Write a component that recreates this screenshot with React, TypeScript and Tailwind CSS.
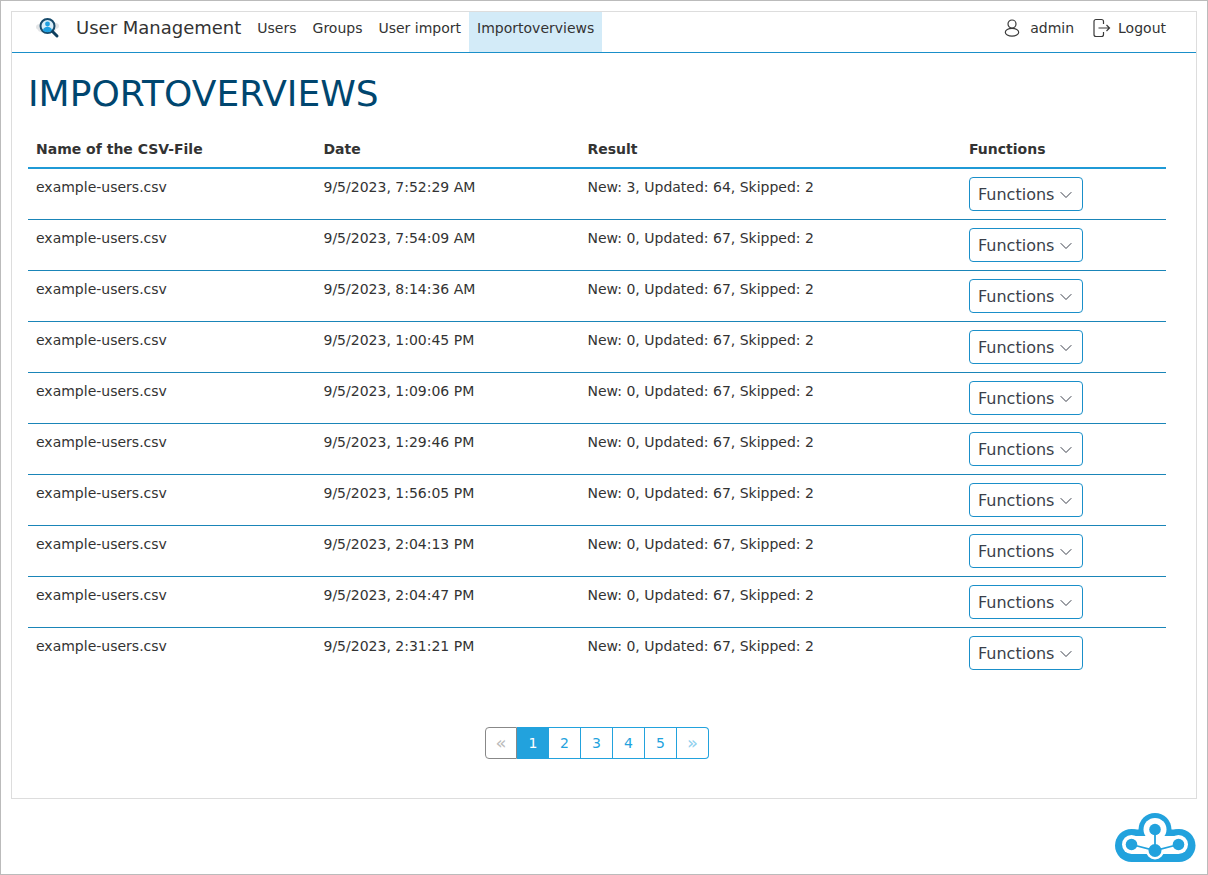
import React from "react";

const rows = [
  ["9/5/2023, 7:52:29 AM", "New: 3, Updated: 64, Skipped: 2"],
  ["9/5/2023, 7:54:09 AM", "New: 0, Updated: 67, Skipped: 2"],
  ["9/5/2023, 8:14:36 AM", "New: 0, Updated: 67, Skipped: 2"],
  ["9/5/2023, 1:00:45 PM", "New: 0, Updated: 67, Skipped: 2"],
  ["9/5/2023, 1:09:06 PM", "New: 0, Updated: 67, Skipped: 2"],
  ["9/5/2023, 1:29:46 PM", "New: 0, Updated: 67, Skipped: 2"],
  ["9/5/2023, 1:56:05 PM", "New: 0, Updated: 67, Skipped: 2"],
  ["9/5/2023, 2:04:13 PM", "New: 0, Updated: 67, Skipped: 2"],
  ["9/5/2023, 2:04:47 PM", "New: 0, Updated: 67, Skipped: 2"],
  ["9/5/2023, 2:31:21 PM", "New: 0, Updated: 67, Skipped: 2"],
];

const AppIcon = () => (
  <svg width="28" height="24" viewBox="0 0 28 24">
    <ellipse cx="6" cy="11" rx="4" ry="3" fill="#e2e4e6" />
    <ellipse cx="21" cy="10" rx="4" ry="3" fill="#e2e4e6" />
    <ellipse cx="13" cy="14" rx="9" ry="3" fill="#e2e4e6" />
    <circle cx="13.5" cy="10" r="7" fill="#d9eefa" stroke="#174a6b" strokeWidth="2" />
    <circle cx="13.5" cy="8" r="2.4" fill="#1f9fe0" />
    <path d="M8.8 14.5c.6-2.6 2.5-3.8 4.7-3.8s4.1 1.2 4.7 3.8c-1.3 1.2-2.9 1.7-4.7 1.7s-3.4-.5-4.7-1.700z" fill="#1f9fe0" />
    <path d="M18.5 15.5l4.5 4.5" stroke="#0f3f5e" strokeWidth="3" strokeLinecap="round" />
  </svg>
);

const UserIcon = () => (
  <svg width="16" height="20" viewBox="0 0 16 20" fill="none" stroke="#3a3a3a" strokeWidth="1.2">
    <circle cx="8" cy="6" r="4" />
    <ellipse cx="8" cy="14.200" rx="6.700" ry="3.900" />
  </svg>
);

const LogoutIcon = () => (
  <svg width="18" height="20" viewBox="0 0 18 20" fill="none" stroke="#3a3a3a" strokeWidth="1.2">
    <path d="M10.5 6V3.500c0-1-.8-2-2-2H3c-1.200 0-2 1-2 2v13c0 1 .8 2 2 2h5.500c1.200 0 2-1 2-2V14" />
    <path d="M5.500 10h11M13.500 7l3 3-3 3" />
  </svg>
);

const Chevron = () => (
  <svg width="12" height="8" viewBox="0 0 12 8" fill="none" stroke="#3a3f4a" strokeWidth="1">
    <path d="M.7 1.200 6 6.500l5.300-5.300" />
  </svg>
);

const CloudLogo = () => (
  <svg width="82" height="50" viewBox="0 0 82 50">
    <g fill="#22a2dd">
      <circle cx="40" cy="17.500" r="16.500" />
      <circle cx="16.500" cy="33.500" r="16.500" />
      <circle cx="64" cy="33.500" r="16.500" />
      <rect x="16.500" y="17.500" width="47.500" height="32.500" />
    </g>
    <g fill="#fff">
      <circle cx="40" cy="17.500" r="11.500" />
      <circle cx="16.500" cy="32.500" r="9.500" />
      <circle cx="63.500" cy="32.500" r="9.500" />
      <rect x="16.500" y="24" width="47" height="18" />
    </g>
    <circle cx="40" cy="38.500" r="9" fill="#fff" />
    <g fill="#22a2dd">
      <circle cx="40" cy="17.500" r="5.800" />
      <circle cx="16.500" cy="32.500" r="5.800" />
      <circle cx="63.500" cy="32.500" r="5.800" />
      <circle cx="40" cy="38.500" r="6.500" />
    </g>
    <path d="M40 17.500v21M16.500 32.500 40 38.500l23.500-6" stroke="#22a2dd" strokeWidth="1.800" fill="none" />
  </svg>
);

const pageBase = "flex h-8 w-8 items-center justify-center";

export default function App() {
  return (
    <div className="h-[875px] border border-[#bbbbbb] bg-white px-[10px] pt-[10px] text-sm text-[#333333] [font-family:'DejaVu_Sans',sans-serif]">
      <div className="h-[788px] border border-[#dddddd]">
        <nav className="flex h-[41px] items-stretch border-b border-[#1a8fc9] pl-[22px] pr-[30px]">
          <div className="flex w-[34px] items-center pb-[8px]">
            <AppIcon />
          </div>
          <a className="ml-[8px] flex items-center pb-[8px] text-lg text-[#333333]">User Management</a>
          <ul className="ml-[8px] flex">
            <li className="flex items-center px-2 pb-[8px]">Users</li>
            <li className="flex items-center px-2 pb-[8px]">Groups</li>
            <li className="flex items-center px-2 pb-[8px]">User import</li>
            <li className="flex items-center bg-[#d3ebf8] px-2 pb-[8px]">Importoverviews</li>
          </ul>
          <div className="ml-auto flex items-center gap-[19px] pb-[8px]">
            <span className="flex items-center gap-[10px]">
              <UserIcon />
              admin
            </span>
            <span className="flex items-center gap-[7px]">
              <LogoutIcon />
              Logout
            </span>
          </div>
        </nav>
        <main className="px-4">
          <h1 className="mt-[19px] text-4xl leading-[43px] text-[#00466f]">IMPORTOVERVIEWS</h1>
          <table className="mt-[16px] w-[1138px] table-fixed border-collapse text-left">
            <thead>
              <tr className="h-[37px] border-b-2 border-[#1f9ad6]">
                <th className="w-[287.5px] px-2 font-bold">Name of the CSV-File</th>
                <th className="w-[264px] px-2 font-bold">Date</th>
                <th className="w-[381.5px] px-2 font-bold">Result</th>
                <th className="px-2 font-bold">Functions</th>
              </tr>
            </thead>
            <tbody>
              {rows.map((row, i) => (
                <tr key={i} className={i < rows.length - 1 ? "border-b border-[#1a85b8]" : ""}>
                  <td className="p-2 align-top">example-users.csv</td>
                  <td className="p-2 align-top">{row[0]}</td>
                  <td className="p-2 align-top">{row[1]}</td>
                  <td className="p-2 align-top">
                    <button className="flex h-[34px] w-[114px] items-center gap-[6px] rounded border border-[#1a8fc9] pl-2 pt-[1px] text-base text-[#3a3f4a]">
                      Functions
                      <Chevron />
                    </button>
                  </td>
                </tr>
              ))}
            </tbody>
          </table>
          <div className="mt-[49px] flex w-[1138px] justify-center">
            <div className="flex text-[#22a2dd]">
              <span className={`${pageBase} rounded-l border border-[#888888] text-lg text-[#bbbbbb]`}>«</span>
              <span className={`${pageBase} bg-[#22a2dd] text-white`}>1</span>
              {[2, 3, 4, 5].map((n) => (
                <span key={n} className={`${pageBase} border-y border-r border-[#22a2dd]`}>{n}</span>
              ))}
              <span className={`${pageBase} rounded-r border-y border-r border-[#22a2dd] text-lg text-[#8fd0ee]`}>»</span>
            </div>
          </div>
        </main>
      </div>
      <div className="mt-[13px] flex justify-end">
        <CloudLogo />
      </div>
    </div>
  );
}
